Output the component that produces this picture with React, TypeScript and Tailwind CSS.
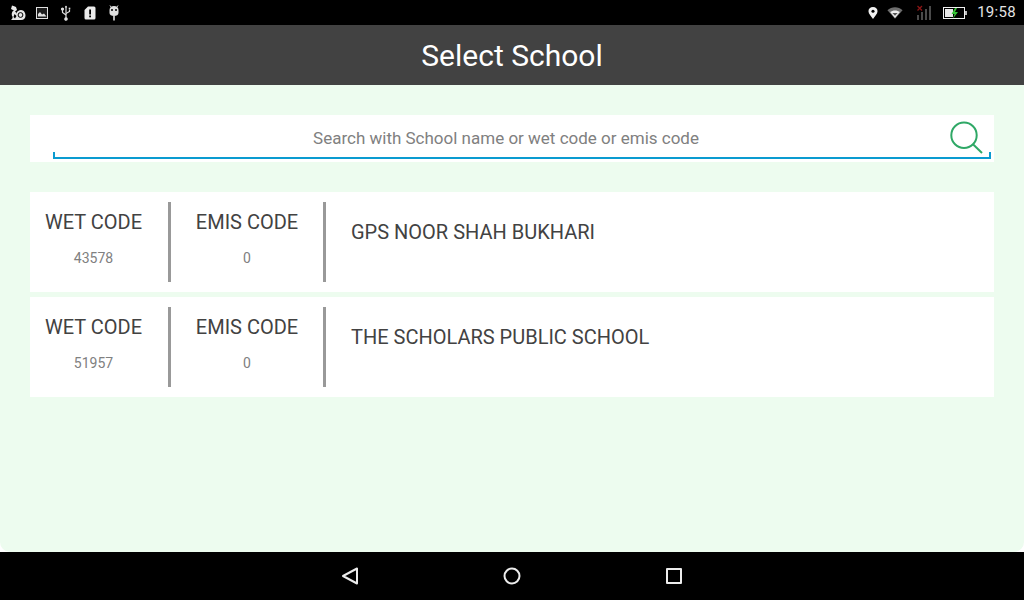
import React from "react";

const schools = [
  { wet: "43578", emis: "0", name: "GPS NOOR SHAH BUKHARI" },
  { wet: "51957", emis: "0", name: "THE SCHOLARS PUBLIC SCHOOL" },
];

function StatusLeft() {
  return (
    <div className="flex items-center">
      {/* notification icons */}
      <svg width="16" height="16" viewBox="0 0 16 16" className="ml-[10px]" fill="#e8e8e8">
        <path d="M2 0.5 C3.5 1 5 1.5 6 2 L7 5 L5 6.5 C6 7 6.5 8.5 6 9 C7 6 9 5 11 5 C14 5 15.5 8 15.5 10.5 C15.5 13 14 15 11 15 L1 15 C2 14 3 13 2.5 11.5 C1 9.5 2 6 4 5.5 L1 4 Z" />
        <circle cx="10.5" cy="10" r="2.4" fill="none" stroke="#000" strokeWidth="1" />
        <path d="M4.5 9 L6.5 11 L5 13.5 L3.5 12 Z" fill="#000" />
      </svg>
      <svg width="13" height="12" viewBox="0 0 13 12" className="ml-[10px]">
        <rect x="0.5" y="0.5" width="11" height="11" fill="#1c1c1c" stroke="#e0e0e0" />
        <path d="M2 9.5 L2 7 L4 5 L6 7.5 L8 6.5 L10.5 9.5 Z" fill="#e0e0e0" />
      </svg>
      <svg width="12" height="16" viewBox="0 0 12 16" className="ml-[11px]" fill="none" stroke="#e0e0e0" strokeWidth="1.2">
        <path d="M6 1 L6 14" />
        <path d="M6 10 L2.5 7.5 L2.5 5" />
        <path d="M6 8.5 L9.5 6.5 L9.5 4.5" />
        <circle cx="6" cy="14" r="1.2" fill="#e0e0e0" />
        <circle cx="2.5" cy="4" r="1" fill="#e0e0e0" />
        <rect x="8.7" y="2.7" width="1.6" height="1.6" fill="#e0e0e0" stroke="none" />
        <path d="M4.8 2.5 L6 0.5 L7.2 2.5 Z" fill="#e0e0e0" stroke="none" />
      </svg>
      <svg width="12" height="14" viewBox="0 0 12 14" className="ml-[12px]">
        <path d="M4 0.5 L10 0.5 Q11.5 0.5 11.5 2 L11.5 12 Q11.5 13.5 10 13.5 L2 13.5 Q0.5 13.5 0.5 12 L0.5 4 Z" fill="#ececec" />
        <rect x="5.2" y="3.5" width="1.8" height="5" fill="#000" />
        <rect x="5.2" y="9.5" width="1.8" height="1.8" fill="#000" />
      </svg>
      <svg width="10" height="16" viewBox="0 0 10 16" className="ml-[13px]" fill="#e0e0e0">
        <path d="M0.5 5 C0.5 2.5 2.5 1 5 1 C7.5 1 9.5 2.5 9.5 5 L9.5 8 C9.5 10 7.5 11 5 11 C2.5 11 0.5 10 0.5 8 Z" />
        <rect x="4.2" y="11" width="1.6" height="4.5" />
        <circle cx="3" cy="5" r="1" fill="#000" />
        <circle cx="7" cy="5" r="1" fill="#000" />
        <path d="M1 0.5 L2.2 2.2 M9 0.5 L7.8 2.2" stroke="#e0e0e0" />
      </svg>
    </div>
  );
}

function StatusRight() {
  return (
    <div className="flex items-center">
      <svg width="10" height="14" viewBox="0 0 11 14">
        <path d="M5.5 0.5 C8.5 0.5 10.5 2.5 10.5 5.2 C10.5 8 7.5 11 5.5 13.5 C3.5 11 0.5 8 0.5 5.2 C0.5 2.5 2.5 0.5 5.5 0.5 Z" fill="#f0f0f0" />
        <circle cx="5.5" cy="5" r="1.7" fill="#000" />
      </svg>
      <svg width="16" height="14" viewBox="0 0 18 14" className="ml-[9px]">
        <path d="M0.5 4 C5 -0.5 13 -0.5 17.5 4 L9 13.5 Z" fill="#6e6e6e" />
        <path d="M3.5 6 C6.5 3.5 11.5 3.5 14.5 6 L9 12.5 Z" fill="#eeeeee" />
        <path d="M6 7 L12 7 L9 10 Z" fill="#555555" />
      </svg>
      <svg width="16" height="15" viewBox="0 0 16 15" className="ml-[13px]">
        <rect x="1" y="10" width="2" height="5" fill="#4a4a4a" />
        <rect x="5" y="7" width="2" height="8" fill="#4a4a4a" />
        <rect x="9" y="4" width="2" height="11" fill="#4a4a4a" />
        <rect x="13" y="1" width="2" height="14" fill="#4a4a4a" />
        <path d="M1.5 1 L6 5.5 M6 1 L1.5 5.5" stroke="#8a1414" strokeWidth="1.3" />
      </svg>
      <svg width="24" height="14" viewBox="0 0 24 14" className="ml-[11px]">
        <rect x="0.5" y="1.5" width="21" height="11" fill="#000" stroke="#f0f0f0" />
        <rect x="2" y="3" width="8" height="8" fill="#e8e8e8" />
        <rect x="22" y="5" width="2" height="4" fill="#bdbdbd" />
        <path d="M12 2 L8.5 8 L11.5 8 L10 12.5 L15 6 L12 6 L14 2 Z" fill="#37c437" />
      </svg>
      <span className="ml-[10px] mr-[8px] text-[15px] leading-none text-[#e4e4e4] font-['Roboto',sans-serif] tracking-[0.3px]">
        19:58
      </span>
    </div>
  );
}

function CodeColumn({ label, value, width }: { label: string; value: string; width: string }) {
  return (
    <div className={`${width} h-20 flex flex-col items-center border-r-[3px] border-[#999999]`}>
      <div className="mt-[8px] text-[20px] leading-[24px] text-[#424242]">{label}</div>
      <div className="mt-[14px] text-[14px] leading-[20px] text-[#808080]">{value}</div>
    </div>
  );
}

export default function App() {
  return (
    <div className="w-[1024px] h-[600px] flex flex-col overflow-hidden bg-white font-['Roboto',sans-serif]">
      {/* status bar */}
      <div className="h-[25px] bg-black flex items-center justify-between">
        <StatusLeft />
        <StatusRight />
      </div>

      {/* title bar */}
      <div className="h-[60px] bg-[#424242] flex items-center justify-center">
        <h1 className="text-[30px] leading-none text-white pt-[2px]">Select School</h1>
      </div>

      {/* content */}
      <div className="flex-1 bg-[#edfcef] rounded-b-[10px] pt-[30px] pl-[30px] pr-[30px]">
        <div className="h-[47px] bg-white pl-[23px] pr-[3px]">
          <div className="relative h-[44px] flex items-center justify-center border-b-2 border-[#0a9bd0] pr-[32px]">
            <span className="text-[17px] text-[#808080] pt-[6px]">Search with School name or wet code or emis code</span>
            <div className="absolute left-0 bottom-0 w-[2px] h-[5px] bg-[#0a9bd0]" />
            <div className="absolute right-0 bottom-0 w-[2px] h-[5px] bg-[#0a9bd0]" />
            <svg width="34" height="34" viewBox="0 0 34 34" className="absolute right-[7px] top-[5px]" fill="none" stroke="#2fa866" strokeWidth="2">
              <circle cx="14" cy="15.3" r="12.7" />
              <path d="M23 24.3 L32 33" />
            </svg>
          </div>
        </div>

        <div className="mt-[30px] flex flex-col gap-[5px]">
          {schools.map((s) => (
            <div key={s.wet} className="h-[100px] bg-white flex items-center">
              <CodeColumn label="WET CODE" value={s.wet} width="w-[141px] pr-[11px]" />
              <CodeColumn label="EMIS CODE" value={s.emis} width="w-[155px]" />
              <div className="h-20 pl-[25px] pt-[18px] text-[20px] leading-[24px] text-[#424242]">{s.name}</div>
            </div>
          ))}
        </div>
      </div>

      {/* nav bar */}
      <div className="h-[48px] bg-black flex items-center justify-center pr-[1px]">
        <svg width="18" height="18" viewBox="0 0 18 18" fill="none" stroke="#ececec" strokeWidth="2" strokeLinejoin="round">
          <path d="M16 1.5 L16 16.5 L2 9 Z" />
        </svg>
        <svg width="18" height="18" viewBox="0 0 18 18" className="ml-[144px]" fill="none" stroke="#ececec" strokeWidth="2">
          <circle cx="9" cy="9" r="7.5" />
        </svg>
        <svg width="16" height="16" viewBox="0 0 16 16" className="ml-[145px]" fill="none" stroke="#ececec" strokeWidth="2" strokeLinejoin="round">
          <rect x="1" y="1" width="14" height="14" />
        </svg>
      </div>
    </div>
  );
}
